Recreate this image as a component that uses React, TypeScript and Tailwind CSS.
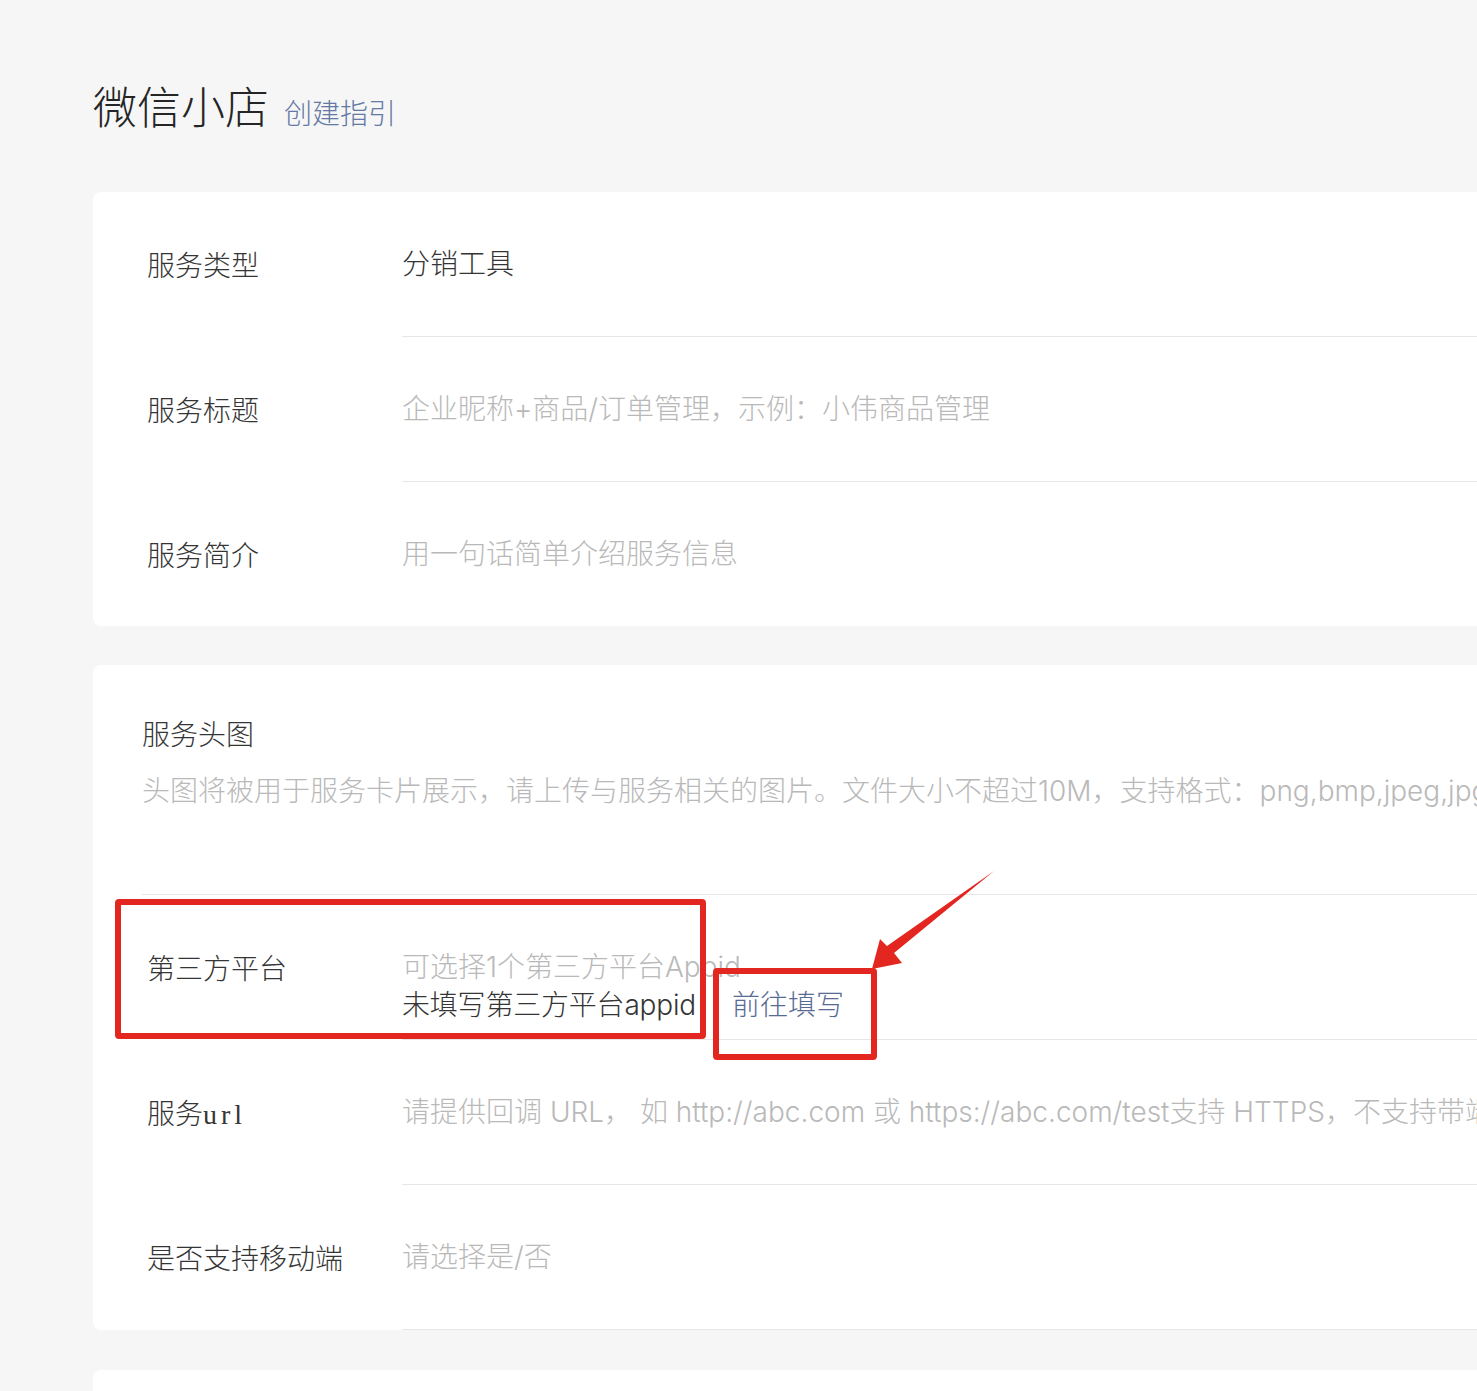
import React from "react";

const labelFont = "font-['Noto_Sans_CJK_SC',sans-serif]";
const bodyFont = "font-['Inter','Noto_Sans_CJK_SC',sans-serif]";

type RowProps = {
  label: React.ReactNode;
  children: React.ReactNode;
  last?: boolean;
};

const Label: React.FC<{ children: React.ReactNode }> = ({ children }) => (
  <div
    className={`w-[309px] shrink-0 pl-[54px] pt-[52px] text-[28px] leading-[40px] font-light text-[#353535] ${labelFont}`}
  >
    {children}
  </div>
);

const Row: React.FC<RowProps> = ({ label, children, last }) => (
  <div className={`flex ${last ? "h-[144px]" : "h-[145px]"}`}>
    <Label>{label}</Label>
    <div
      className={`flex-1 pt-[52px] text-[28px] leading-[40px] whitespace-nowrap ${
        last ? "" : "border-b border-[#e6e6e6]"
      }`}
    >
      {children}
    </div>
  </div>
);

const Placeholder: React.FC<{ children: React.ReactNode }> = ({ children }) => (
  <span className="text-[#b9b9b9]">{children}</span>
);

const App: React.FC = () => {
  return (
    <div
      className={`relative w-[1477px] h-[1391px] overflow-hidden bg-[#f6f6f6] pl-[93px] font-light ${bodyFont}`}
    >
      {/* Header */}
      <div className="flex items-baseline pt-[78px] h-[136px]">
        <h1 className="text-[44px] leading-[60px] font-light text-[#252525]">
          微信小店
        </h1>
        <a className="ml-[15px] text-[28px] leading-[40px] text-[#6479a3]">
          创建指引
        </a>
      </div>

      {/* Basic info */}
      <div className="mt-[56px] w-[1440px] rounded-[8px] bg-white">
        <Row label="服务类型">
          <span className="text-[#353535]">分销工具</span>
        </Row>
        <Row label="服务标题">
          <Placeholder>企业昵称+商品/订单管理，示例：小伟商品管理</Placeholder>
        </Row>
        <Row label="服务简介" last>
          <Placeholder>用一句话简单介绍服务信息</Placeholder>
        </Row>
      </div>

      {/* Service details */}
      <div className="mt-[39px] w-[1440px] rounded-[8px] bg-white">
        <div className="ml-[49px] h-[230px] pt-[48px] border-b border-[#e6e6e6]">
          <div className={`text-[28px] leading-[40px] text-[#353535] ${labelFont}`}>
            服务头图
          </div>
          <div className="mt-[18px] text-[28px] leading-[40px] text-[#b9b9b9] whitespace-nowrap">
            头图将被用于服务卡片展示，请上传与服务相关的图片。文件大小不超过10M，支持格式：png,bmp,jpeg,jpg,gif
          </div>
        </div>

        <div className="flex h-[145px]">
          <Label>第三方平台</Label>
          <div className="flex-1 pt-[53px] text-[28px] leading-[38px] whitespace-nowrap border-b border-[#e6e6e6]">
            <div className="text-[#b9b9b9]">可选择1个第三方平台Appid</div>
            <div className="flex">
              <span className="text-[#353535] tracking-[-0.2px]">未填写第三方平台appid</span>
              <a className="ml-[36px] text-[#576b95]">前往填写</a>
            </div>
          </div>
        </div>

        <Row
          label={
            <>
              服务
              <span className="font-['Liberation_Serif',serif] font-normal tracking-[4px]">
                url
              </span>
            </>
          }
        >
          <Placeholder>
            请提供回调 URL， 如 http://abc.com 或 https://abc.com/test支持 HTTPS，不支持带端口的地址
          </Placeholder>
        </Row>
        <div className="flex h-[145px]">
          <Label>是否支持移动端</Label>
          <div className="flex-1 pt-[52px] text-[28px] leading-[40px] border-b border-[#e6e6e6]">
            <Placeholder>请选择是/否</Placeholder>
          </div>
        </div>
      </div>

      {/* Next card (cut off) */}
      <div className="mt-[40px] w-[1440px] h-[300px] rounded-[8px] bg-white" />

      {/* Annotations */}
      <div className="absolute left-[115px] top-[899px] w-[591px] h-[140px] rounded-[4px] border-[6px] border-[#e3261f] pointer-events-none" />
      <div className="absolute left-[713px] top-[968px] w-[164px] h-[92px] rounded-[4px] border-[6px] border-[#e3261f] pointer-events-none" />
      <svg
        className="absolute left-0 top-0 pointer-events-none"
        width="1477"
        height="1391"
        viewBox="0 0 1477 1391"
      >
        <polygon
          points="872,969 880,939 887,946 994,871 894,953 902,963"
          fill="#e3261f"
        />
      </svg>
    </div>
  );
};

export default App;
